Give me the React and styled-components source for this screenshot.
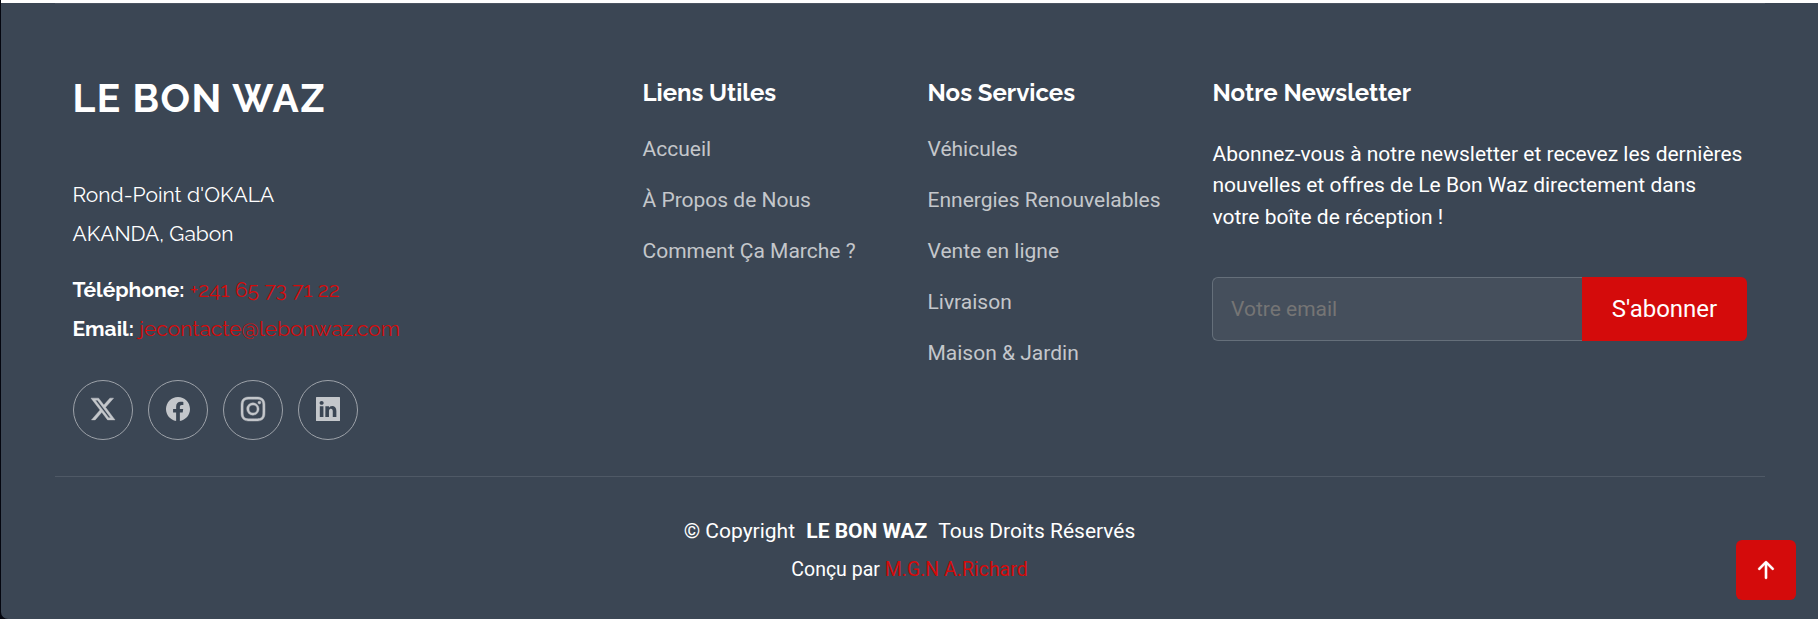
import React from "react";
import styled, { createGlobalStyle } from "styled-components";
import { BsTwitterX, BsFacebook, BsInstagram, BsArrowUpShort } from "react-icons/bs";

const GlobalStyle = createGlobalStyle`
  *, *::before, *::after { box-sizing: border-box; }
  body { margin: 0; background: #04060f; overflow: hidden; }
  h4, p, ul { margin: 0; padding: 0; }
  a { text-decoration: none; color: inherit; }
`;

const accent = "#d40b0b";
const heading = `Raleway, Lato, "Open Sans", sans-serif`;

const Page = styled.div`
  height: 619px;
  padding-left: 1px;
  font: 21px/31.5px Roboto, sans-serif;
  color: #fff;
`;

const Footer = styled.footer`
  height: 619px;
  background: #3b4654;
  border-top: 3px solid #fff;
  border-bottom-left-radius: 7px;
`;

const Container = styled.div`
  width: 1710px;
  margin-left: 53.5px;
  border-top: 1px solid #4c5562;
`;

const Columns = styled.div`
  display: grid;
  grid-template-columns: 570px 285px 285px 570px;
  height: 472px;
  padding-top: 74px;
`;

const Column = styled.section`
  padding: 0 18px;
  white-space: nowrap;
`;

const Brand = styled.a`
  display: block;
  font: 700 39px/39px ${heading};
  letter-spacing: 1.5px;
  padding-top: 1px;
  margin-bottom: 57px;
`;

const ContactLine = styled.p`
  font: 400 21px/39px ${heading};
  margin-top: ${(p) => (p.$gap ? 17 : 0)}px;
`;

const AccentLink = styled.a`
  color: ${accent};
`;

const Socials = styled.div`
  display: flex;
  gap: 15px;
  margin-top: 32px;
`;

const SocialLink = styled.a`
  display: flex;
  align-items: center;
  justify-content: center;
  width: 60px;
  height: 60px;
  padding-bottom: 2px;
  border: 1px solid #9da2a9;
  border-radius: 50%;
  font-size: 24px;
  color: #c4c7cb;

  svg {
    overflow: visible;
    stroke-width: ${(p) => p.$weight};
  }
`;

const Title = styled.h4`
  font: 700 24px/29px ${heading};
`;

const LinkList = styled.ul`
  list-style: none;
  margin-top: 32px;
  display: grid;
  gap: 30px;
  line-height: 21px;
  color: #c4c7cb;
`;

const Intro = styled.p`
  margin-top: 31.5px;
`;

const Form = styled.form`
  display: flex;
  width: 535px;
  height: 64px;
  margin: 43.5px 0 0 -0.5px;
`;

const EmailInput = styled.input`
  flex: 1;
  min-width: 0;
  padding: 0 18px;
  border: 1px solid #656f7a;
  border-right: 0;
  border-radius: 6px 0 0 6px;
  background: #454f5c;
  font: 21px Roboto, sans-serif;
  color: #fff;
  &::placeholder { color: #757575; }
`;

const SubmitButton = styled.button`
  width: 165px;
  padding: 0;
  border: 0;
  border-radius: 0 6px 6px 0;
  background: ${accent};
  color: #fff;
  font: 24px Roboto, sans-serif;
`;

const Bottom = styled.div`
  border-top: 1px solid #4f5966;
  padding-top: 39px;
  text-align: center;
`;

const Copyright = styled.p`
  strong { margin: 0 6px; }
`;

const Credits = styled.p`
  margin-top: 7px;
  font-size: 19.5px;
  line-height: 29px;
`;

const ScrollTop = styled.a`
  position: fixed;
  right: 22px;
  bottom: 19px;
  display: flex;
  align-items: center;
  justify-content: center;
  width: 60px;
  height: 60px;
  padding-right: 1px;
  border-radius: 6px;
  background: ${accent};
  font-size: 36px;

  svg { stroke-width: 0.15; }
`;

function LinkedinIcon() {
  return (
    <svg width="1em" height="1em" viewBox="0 0 16 16" fill="currentColor">
      <path d="M0 .4Q0 0 .4 0h15.2q.4 0 .4.4v15.2q0 .4-.4.4H.4Q0 16 0 15.6V.4zm4.943 12.994V6.169H2.542v7.225h2.401zm-1.2-8.212c.837 0 1.358-.554 1.358-1.248-.015-.709-.52-1.248-1.342-1.248-.822 0-1.359.54-1.359 1.248 0 .694.521 1.248 1.327 1.248h.016zm4.908 8.212V9.359c0-.216.016-.432.08-.586.173-.431.568-.878 1.232-.878.869 0 1.216.662 1.216 1.634v3.865h2.401V9.25c0-2.22-1.184-3.252-2.764-3.252-1.274 0-1.845.7-2.165 1.193v.025h-.016a5.54 5.54 0 0 1 .016-.025V6.169h-2.4c.03.678 0 7.225 0 7.225h2.4z" />
    </svg>
  );
}

const socials = [
  { Icon: BsTwitterX, weight: 0.3 },
  { Icon: BsFacebook, weight: 0 },
  { Icon: BsInstagram, weight: 0.3 },
  { Icon: LinkedinIcon, weight: 0 },
];
const usefulLinks = ["Accueil", "À Propos de Nous", "Comment Ça Marche ?"];
const services = ["Véhicules", "Ennergies Renouvelables", "Vente en ligne", "Livraison", "Maison & Jardin"];

function Links({ title, items }) {
  return (
    <Column>
      <Title>{title}</Title>
      <LinkList>
        {items.map((item) => (
          <li key={item}><a href="#">{item}</a></li>
        ))}
      </LinkList>
    </Column>
  );
}

export default function App() {
  return (
    <Page>
      <GlobalStyle />
      <Footer>
        <Container>
          <Columns>
            <Column>
              <Brand href="#">LE BON WAZ</Brand>
              <ContactLine>Rond-Point d'OKALA</ContactLine>
              <ContactLine>AKANDA, Gabon</ContactLine>
              <ContactLine $gap><strong>Téléphone:</strong> <AccentLink href="#">+241 65 73 71 22</AccentLink></ContactLine>
              <ContactLine><strong>Email:</strong> <AccentLink href="#">jecontacte@lebonwaz.com</AccentLink></ContactLine>
              <Socials>
                {socials.map(({ Icon, weight }, i) => (
                  <SocialLink href="#" key={i} $weight={weight}><Icon /></SocialLink>
                ))}
              </Socials>
            </Column>
            <Links title="Liens Utiles" items={usefulLinks} />
            <Links title="Nos Services" items={services} />
            <Column>
              <Title>Notre Newsletter</Title>
              <Intro>
                Abonnez-vous à notre newsletter et recevez les dernières<br />
                nouvelles et offres de Le Bon Waz directement dans<br />
                votre boîte de réception !
              </Intro>
              <Form>
                <EmailInput placeholder="Votre email" />
                <SubmitButton type="button">S'abonner</SubmitButton>
              </Form>
            </Column>
          </Columns>
          <Bottom>
            <Copyright>© Copyright <strong>LE BON WAZ</strong> Tous Droits Réservés</Copyright>
            <Credits>Conçu par <AccentLink href="#">M.G.N A.Richard</AccentLink></Credits>
          </Bottom>
        </Container>
      </Footer>
      <ScrollTop href="#"><BsArrowUpShort /></ScrollTop>
    </Page>
  );
}
